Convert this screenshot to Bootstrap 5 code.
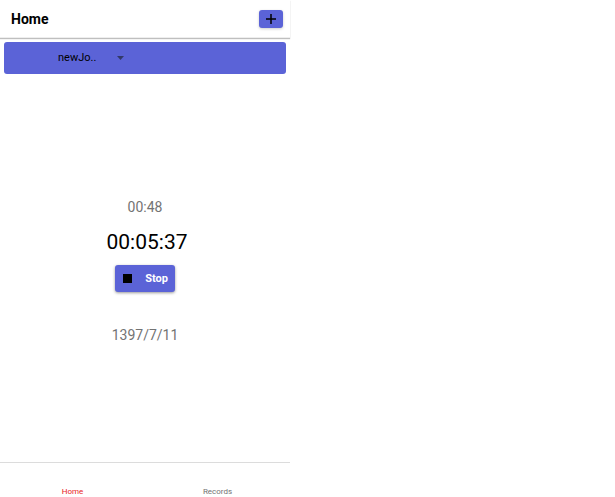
<!DOCTYPE html>
<html lang="en">
<head>
<meta charset="utf-8">
<meta name="viewport" content="width=device-width, initial-scale=1">
<title>Home</title>
<link href="https://cdn.jsdelivr.net/npm/bootstrap@5.3.0/dist/css/bootstrap.min.css" rel="stylesheet">
<style>
  body { font-family: Roboto, "Liberation Sans", sans-serif; color: #000; background: #fff; }
  .phone { max-width: 290px; }
  .topbar { padding: 0 7px 0 11px; height: 38px; border-bottom: 1px solid #eee; box-shadow: 0 1px 1px rgba(0,0,0,.25); }
  .topbar h1 { font-size: 14px; line-height: 20px; font-weight: 700; }
  .accent, .accent:hover, .accent:active { background-color: #5b63d7; color: #000; border: 0; border-radius: 3px; }
  .add-btn { width: 24px; height: 18px; box-shadow: 0 1px 3px rgba(0,0,0,.2); }
  .job-bar { margin: 4px 4px 0; padding: 0 54px; height: 32px; }
  .job-select {
    width: 74px; padding: 0; font-size: 11px; line-height: 20px; border: 0; border-radius: 0; color: #000;
    background-color: transparent; background-size: 7px 4px; background-position: right 8px center;
    background-image: url("data:image/svg+xml,%3Csvg xmlns='http://www.w3.org/2000/svg' viewBox='0 0 7 4'%3E%3Cpath d='M0 0h7L3.5 4z' fill='%23323968'/%3E%3C/svg%3E");
  }
  .muted { font-size: 14px; line-height: 20px; color: #737373; }
  .content { padding-top: 6px; }
  .elapsed { font-size: 21px; line-height: 28px; margin: 11px 0 9px; padding-left: 4px; }
  .stop-btn { width: 60px; height: 27px; padding: 0 7px 0 8px; box-shadow: 0 1px 3px rgba(0,0,0,.4); }
  .stop-btn, .stop-btn:hover { color: #fff; font-size: 11px; line-height: 16px; font-weight: 700; }
  .day { margin-top: 33px; }
  .tabs { height: 35px; border-top: 1px solid #dcdcdc; font-size: 8px; line-height: 10px; }
  .tabs a { color: #737373; }
  .tabs a.active { color: #e81c1c; }
</style>
</head>
<body>
<div class="phone w-100 min-vh-100 d-flex flex-column">
  <header class="topbar d-flex align-items-center justify-content-between">
    <h1 class="m-0">Home</h1>
    <button type="button" class="btn accent add-btn p-0 d-flex align-items-center justify-content-center" aria-label="Add job">
      <svg width="10" height="10" viewBox="0 0 10 10" aria-hidden="true"><path d="M5 0v10M0 5h10" stroke="#000" stroke-width="1.5"/></svg>
    </button>
  </header>
  <div class="accent job-bar d-flex align-items-center">
    <select class="form-select job-select" aria-label="Job"><option>newJo..</option></select>
  </div>
  <main class="content flex-grow-1 d-flex flex-column align-items-center justify-content-center">
    <div class="muted">00:48</div>
    <div class="elapsed">00:05:37</div>
    <button type="button" class="btn accent stop-btn d-flex align-items-center justify-content-between">
      <svg width="9" height="9" viewBox="0 0 9 9" aria-hidden="true"><path d="M0 0h9v9H0z" fill="#000"/></svg>
      <span>Stop</span>
    </button>
    <div class="muted day">1397/7/11</div>
  </main>
  <nav class="tabs d-flex align-items-end text-center" aria-label="Main">
    <a href="#home" class="active flex-fill w-50 text-decoration-none" aria-current="page">Home</a>
    <a href="#records" class="flex-fill w-50 text-decoration-none">Records</a>
  </nav>
</div>
<script src="https://cdn.jsdelivr.net/npm/bootstrap@5.3.0/dist/js/bootstrap.bundle.min.js"></script>
</body>
</html>
